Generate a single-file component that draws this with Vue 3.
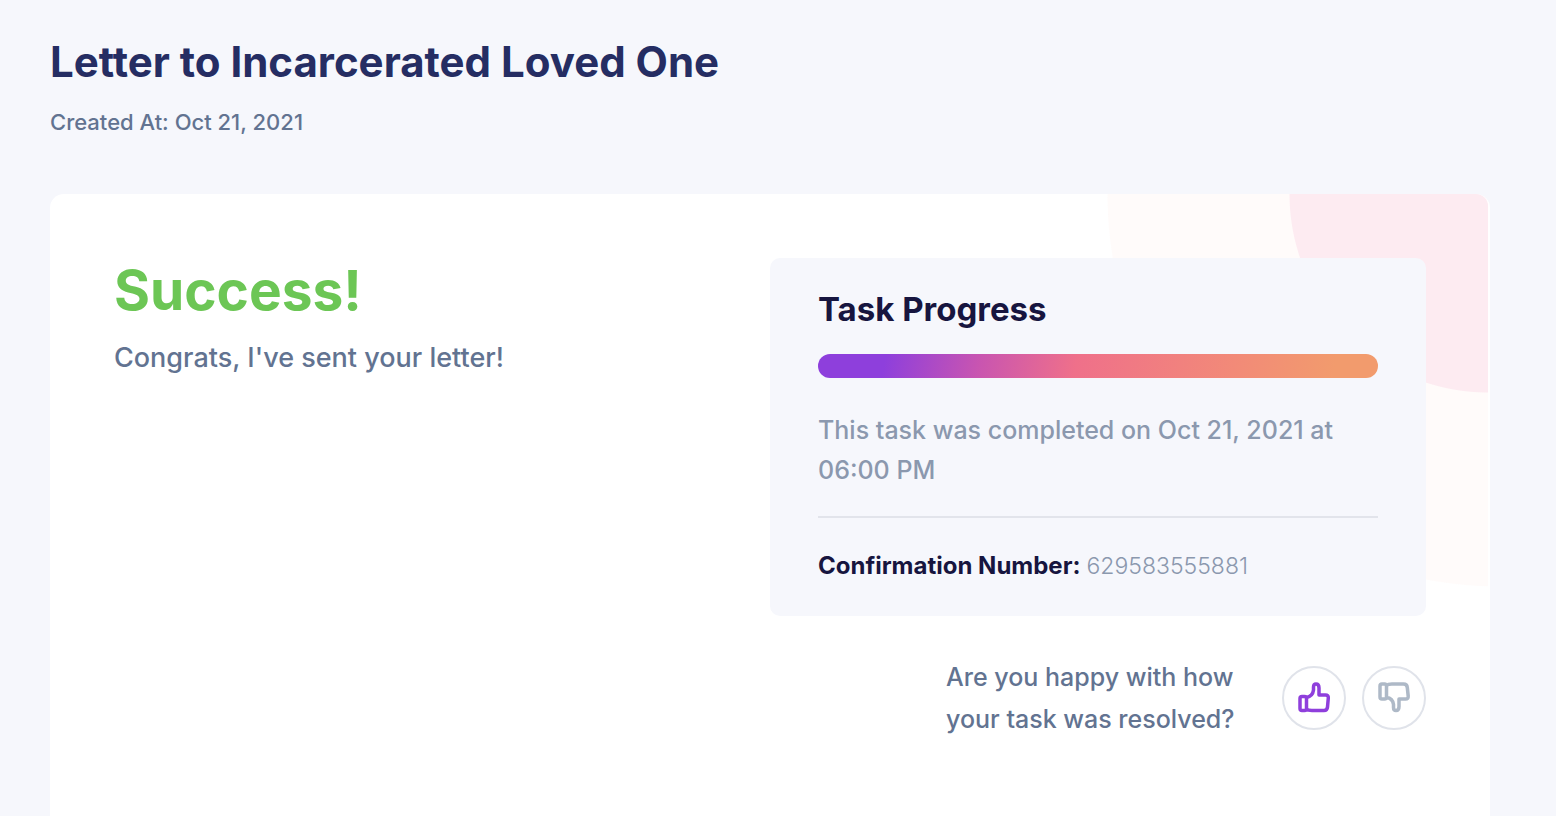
<script setup>
const createdAt = 'Oct 21, 2021'
const confirmation = '629583555881'
</script>

<template>
  <main class="page">
    <header class="head">
      <h1>Letter to Incarcerated Loved One</h1>
      <p>Created At: {{ createdAt }}</p>
    </header>
    <section class="card">
      <div class="decor" aria-hidden="true"></div>
      <div class="message">
        <h2>Success!</h2>
        <p>Congrats, I've sent your letter!</p>
      </div>
      <div class="side">
        <section class="progress">
          <h3>Task Progress</h3>
          <div class="bar" role="progressbar" aria-label="Task Progress" aria-valuenow="100"></div>
          <p class="done">This task was completed on {{ createdAt }} at 06:00 PM</p>
          <p class="number"><strong>Confirmation Number:</strong><span>{{ confirmation }}</span></p>
        </section>
        <div class="feedback">
          <p>Are you happy with how your task was resolved?</p>
          <button type="button" class="up" aria-label="Yes">
            <svg viewBox="0 0 32 32"><path d="M4 14.500H6.500Q8.500 14.500 8.500 16.500V26.500Q8.500 28.500 6.500 28.500H4Q2 28.500 2 26.500V16.500Q2 14.500 4 14.500ZM8.500 15.500C13 14.500 15 12 15.500 8V5Q15.500 2 18 2Q21 2 21 6V13H27.500Q30.500 13 30.300 16L29.500 25Q29.200 28.500 26 28.500H14Q10 28.500 8.500 27" /></svg>
          </button>
          <button type="button" class="down" aria-label="No">
            <svg viewBox="0 0 32 32"><path d="M4 2H6.500Q8.500 2 8.500 4V15Q8.500 17 6.500 17H4Q2 17 2 15V4Q2 2 4 2ZM8.500 3.500Q10 2 14 2H25.500Q29 2 29.300 5.500L30.200 14Q30.500 17 27.500 17H21V24.500Q21 28.500 18 28.500Q15.500 28.500 15.500 25.500V22.500C15 18.500 13 16 8.500 15.500" /></svg>
          </button>
        </div>
      </div>
    </section>
  </main>
</template>

<style>
body { margin: 0; background: #f6f7fc; }
</style>

<style scoped>
* { box-sizing: border-box; }
h1, h2, h3, p { margin: 0; }
.page { min-height: 100vh; padding: 36px 66px 0 50px; display: flex; flex-direction: column; font-family: Inter, "Open Sans", sans-serif; color: #627391; }
.head { padding-bottom: 54px; }
h1 { color: #252d63; font-size: 42px; line-height: 52px; }
.head p { margin-top: 16px; font-size: 22px; line-height: 36px; font-weight: 500; }
.card { flex: 1; position: relative; display: flex; justify-content: space-between; padding: 64px; border-radius: 14px 14px 0 0; background: #fff; }
.decor { position: absolute; inset: 0 2px 0 0; border-radius: 0 12px 0 0; background: radial-gradient(circle at 100% 0, #fdebf1 198px, transparent 199px), radial-gradient(circle at calc(100% + 12px) 0, #fffbfa 392px, transparent 393px); }
.message, .side { position: relative; }
h2 { font-size: 55px; line-height: 64px; color: #6cc655; }
.message p { margin-top: 16px; font-size: 27px; line-height: 40px; font-weight: 500; }
.side { width: 656px; }
.progress { padding: 30px 48px 32px; border-radius: 10px; background: #f6f7fc; }
h3 { font-size: 33px; line-height: 42px; color: #17153f; }
.bar { margin-top: 24px; height: 24px; border-radius: 12px; background: linear-gradient(100deg, #8e3fdc 12%, #c955b0 29%, #ef708a 46%, #f28a78 74%, #f29b6d 92%); }
.done { margin-top: 32px; padding-bottom: 26px; border-bottom: 2px solid #e2e4eb; font-size: 25px; line-height: 40px; font-weight: 500; color: #8b98ae; }
.number { margin-top: 30px; font-size: 23px; line-height: 36px; font-weight: 300; color: #8b98ae; }
.number strong { margin-right: 6px; font-size: 24px; font-weight: 700; color: #17153f; }
.feedback { display: flex; justify-content: flex-end; gap: 16px; margin-top: 40px; align-items: center; font-size: 25px; line-height: 42px; font-weight: 500; }
.feedback p { width: 320px; }
button { display: grid; place-items: center; width: 64px; height: 64px; padding: 0; border: 2px solid #e0e3ea; border-radius: 50%; background: #fff; cursor: pointer; }
.up { color: #8f3fdc; }
.down { color: #aeb9c7; }
svg { width: 32px; height: 32px; overflow: visible; fill: none; stroke: currentColor; stroke-width: 3.5; stroke-linejoin: round; stroke-linecap: round; }
</style>
